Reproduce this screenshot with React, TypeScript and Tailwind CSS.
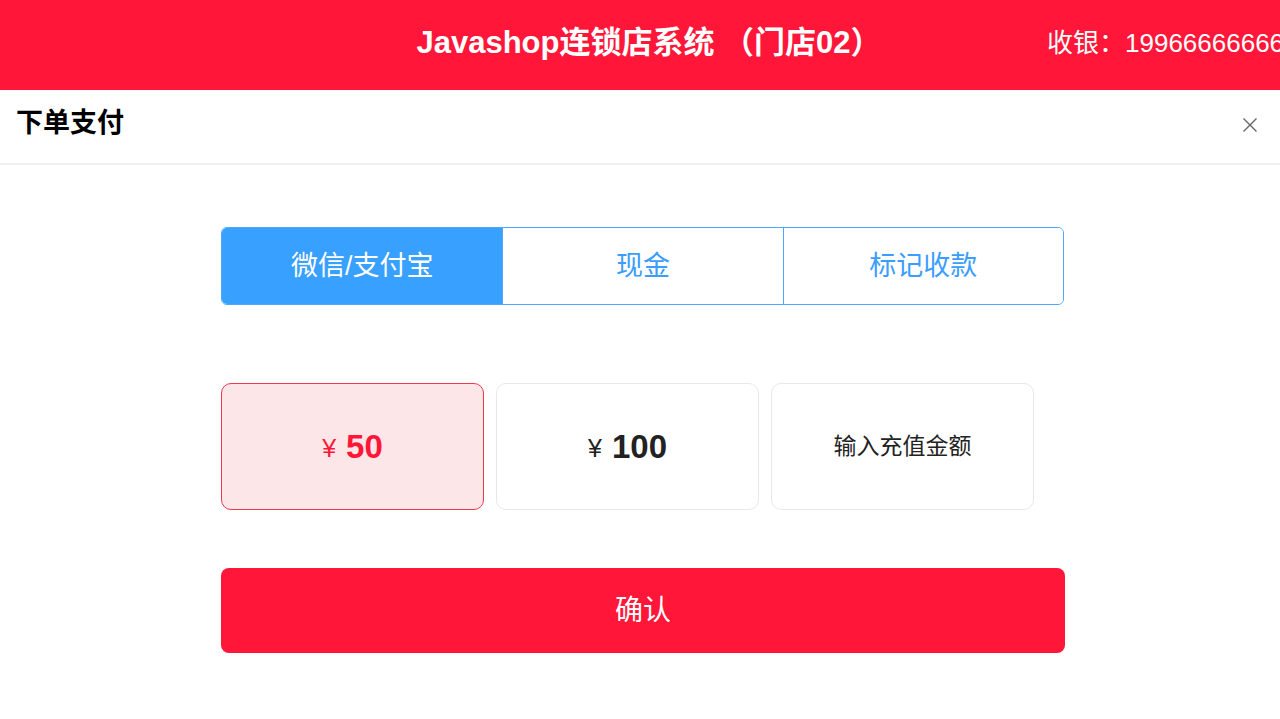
import { useState } from "react";

const font = { fontFamily: '"Liberation Sans", "Noto Sans CJK SC", sans-serif' };

const tabs = ["微信/支付宝", "现金", "标记收款"];

function CloseIcon() {
  return (
    <svg width="16" height="16" viewBox="0 0 16 16" className="text-[#666]">
      <path d="M1.5 1.5 L14.5 14.5 M14.5 1.5 L1.5 14.5" stroke="currentColor" strokeWidth="1.4" fill="none" />
    </svg>
  );
}

export default function App() {
  const [tab, setTab] = useState(0);
  const [amount, setAmount] = useState(0);

  return (
    <div className="w-[1280px] h-[719px] bg-white overflow-hidden" style={font}>
      <header className="h-[90px] bg-[#ff1638] flex items-center overflow-hidden whitespace-nowrap text-white">
        <div className="flex-none w-[1047px] pl-[251px] text-center text-[31px] font-bold pb-[4px]">
          Javashop连锁店系统 （门店02）
        </div>
        <div className="flex-none text-[26px] pb-[4px]">收银：19966666666</div>
      </header>

      <div className="h-[75px] flex items-center justify-between pl-4 pr-[22px] border-b-2 border-[#efefef]">
        <h1 className="text-[27px] font-bold text-black pb-[6px]">下单支付</h1>
        <button className="pb-[4px]">
          <CloseIcon />
        </button>
      </div>

      <div className="ml-[221px] pt-[62px]">
        <div className="w-[843px] h-[78px] grid grid-cols-3 border border-[#4ea6ff] rounded-md overflow-hidden">
          {tabs.map((t, i) => (
            <button
              key={t}
              onClick={() => setTab(i)}
              className={
                "flex items-center justify-center text-[27px] " +
                (i > 0 ? "border-l border-[#4ea6ff] " : "") +
                (tab === i ? "bg-[#38a0ff] text-white" : "bg-white text-[#3a9dff]")
              }
            >
              {t}
            </button>
          ))}
        </div>

        <div className="mt-[78px] w-[813px] grid grid-cols-3 gap-3">
          {["50", "100"].map((v, i) => (
            <button
              key={v}
              onClick={() => setAmount(i)}
              className={
                "h-[127px] rounded-[10px] border flex items-center justify-center gap-[10px] " +
                (amount === i
                  ? "bg-[#fde6e8] border-[#f03650] text-[#ff1638]"
                  : "bg-white border-[#e8e8e8] text-[#222]")
              }
            >
              <span className="text-[25px] pt-[4px]">¥</span>
              <span className="text-[33px] font-bold">{v}</span>
            </button>
          ))}
          <button
            onClick={() => setAmount(2)}
            className={
              "h-[127px] rounded-[10px] border flex items-center justify-center text-[23px] " +
              (amount === 2 ? "bg-[#fde6e8] border-[#f03650] text-[#ff1638]" : "bg-white border-[#e8e8e8] text-[#222]")
            }
          >
            输入充值金额
          </button>
        </div>

        <button className="mt-[58px] w-[844px] h-[85px] rounded-lg bg-[#ff1638] text-white text-[28px] flex items-center justify-center">
          确认
        </button>
      </div>
    </div>
  );
}
